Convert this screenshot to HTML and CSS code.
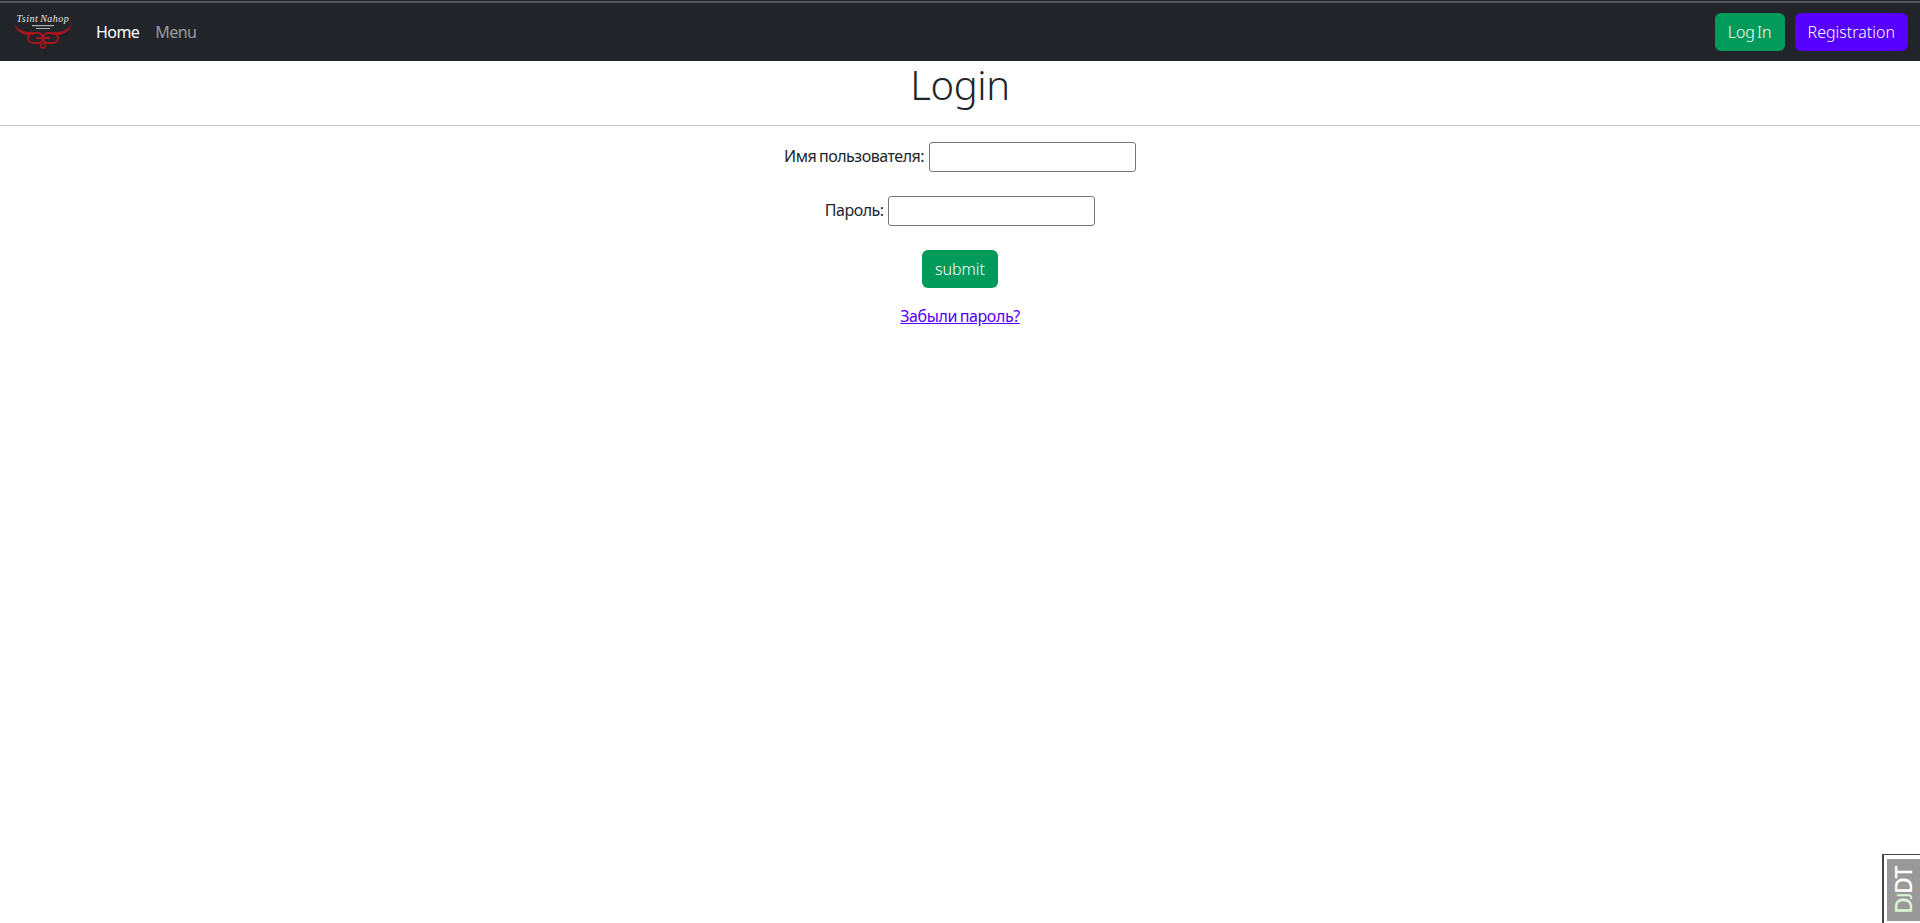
FILE: index.html
```html
<!DOCTYPE html>
<html lang="ru">

<head>
    <meta charset="UTF-8" />
    <meta name="viewport" content="width=device-width, initial-scale=1.0" />
    <title>Login</title>
    <link rel="stylesheet" href="styles.css">
</head>

<body>
    <nav class="navbar">
        <a class="brand" href="#">
            <svg class="logo" width="60" height="35" viewBox="0 0 60 35">
                <text class="logo-name" x="30" y="8" text-anchor="middle">Tsint Nahop</text>
                <rect class="logo-sub" x="19" y="11" width="22" height="1.2"></rect>
                <rect class="logo-sub" x="23" y="14" width="14" height="1"></rect>
                <path class="logo-horns" d="M1 9 C3 14 8 17 15 18 L22 18 L20 21 L14 21 C7 20 2 15 1 9 Z" />
                <path class="logo-horns" d="M59 9 C57 14 52 17 45 18 L38 18 L40 21 L46 21 C53 20 58 15 59 9 Z" />
                <rect class="logo-ring" x="15" y="19" width="15" height="10" rx="5"></rect>
                <rect class="logo-ring" x="30" y="19" width="15" height="10" rx="5"></rect>
                <path class="logo-ring" d="M23 24 H37" />
                <circle class="logo-ring-small" cx="30" cy="31.5" r="2.5"></circle>
            </svg>
        </a>
        <div class="nav-links">
            <a class="nav-link active" href="#">Home</a>
            <a class="nav-link" href="#">Menu</a>
        </div>
        <div class="nav-buttons">
            <a class="btn btn-green" href="#">Log In</a>
            <a class="btn btn-indigo" href="#">Registration</a>
        </div>
    </nav>

    <main class="content">
        <h1>Login</h1>
        <hr>
        <form class="login-form">
            <p class="field">
                <label for="username">Имя пользователя:</label>
                <input type="text" id="username">
            </p>
            <p class="field">
                <label for="password">Пароль:</label>
                <input type="password" id="password">
            </p>
            <button class="btn btn-green" type="button">submit</button>
        </form>
        <a class="forgot" href="#">Забыли пароль?</a>
    </main>

    <a class="djdt-handle" href="#"><span class="djdt-inner"><span class="djdt-d">D<span class="djdt-j">J</span></span>DT</span></a>
</body>

</html>
```

FILE: styles.css
```css
* {
    box-sizing: border-box;
}

body {
    margin: 0;
    font-family: "Noto Sans", sans-serif;
    font-size: 16px;
    line-height: 1.5;
    letter-spacing: -0.025em;
    word-spacing: -1px;
    color: #212529;
    background: white;
}

.navbar {
    display: flex;
    align-items: center;
    height: 61px;
    padding: 1px 12px 0 13px;
    background: #212529;
    border-top: 1px solid #212529;
    box-shadow: inset 0 2px 0 #55585b;
}

.brand {
    display: flex;
    margin-right: 15px;
}

.logo-name {
    font-family: "Liberation Serif", serif;
    font-style: italic;
    font-size: 10px;
    letter-spacing: 0.5px;
    fill: #e8e8e8;
}

.logo-sub {
    fill: #b0b0b0;
}

.logo-horns {
    fill: #a8141e;
}

.logo-ring {
    fill: none;
    stroke: #a8141e;
    stroke-width: 2.2;
}

.logo-ring-small {
    fill: none;
    stroke: #a8141e;
    stroke-width: 1.5;
}

.nav-links {
    display: flex;
}

.nav-link {
    padding: 8px;
    letter-spacing: -0.035em;
    color: rgba(255, 255, 255, 0.55);
    text-decoration: none;
}

.nav-link.active {
    color: white;
}

.nav-buttons {
    display: flex;
    gap: 10px;
    margin-left: auto;
}

.btn {
    display: inline-block;
    padding: 6px 12px;
    font-family: inherit;
    font-size: 16px;
    font-weight: 300;
    line-height: 24px;
    letter-spacing: 0;
    word-spacing: -2px;
    color: white;
    text-decoration: none;
    border: 1px solid transparent;
    border-radius: 6px;
}

.btn-green {
    background: #009a5b;
}

.btn-indigo {
    background: #5600ff;
}

.content {
    display: flex;
    flex-direction: column;
    align-items: center;
}

h1 {
    margin: 0 0 16px;
    font-size: 40px;
    font-weight: 300;
    line-height: 1.2;
}

hr {
    width: 100%;
    margin: 0 0 16px;
    border: 0;
    border-top: 1px solid #c8c9ca;
}

.login-form {
    display: flex;
    flex-direction: column;
    align-items: center;
}

.field {
    margin: 0 0 16px;
    height: 38px;
}

.field label {
    margin-right: 2px;
    letter-spacing: -0.03em;
}

.field input {
    width: 207px;
    height: 30px;
    padding: 1px 2px;
    border: 1px solid #767676;
    border-radius: 3px;
}

.forgot {
    margin-top: 16px;
    color: #5600ff;
}

.djdt-handle {
    position: fixed;
    right: 0;
    bottom: 0;
    width: 38px;
    height: 69px;
    padding: 4px 0 2px 3px;
    background: white;
    border-top: 1px solid #444;
    border-left: 2px solid #444;
    text-decoration: none;
}

.djdt-inner {
    display: flex;
    align-items: center;
    justify-content: center;
    width: 100%;
    height: 100%;
    background: #999;
    color: white;
    font-size: 23px;
    font-weight: 500;
    line-height: 1;
    letter-spacing: -0.5px;
    writing-mode: vertical-rl;
    transform: rotate(180deg);
}

.djdt-d {
    color: #d9f5d4;
}

.djdt-j {
    font-size: 17px;
}
```
